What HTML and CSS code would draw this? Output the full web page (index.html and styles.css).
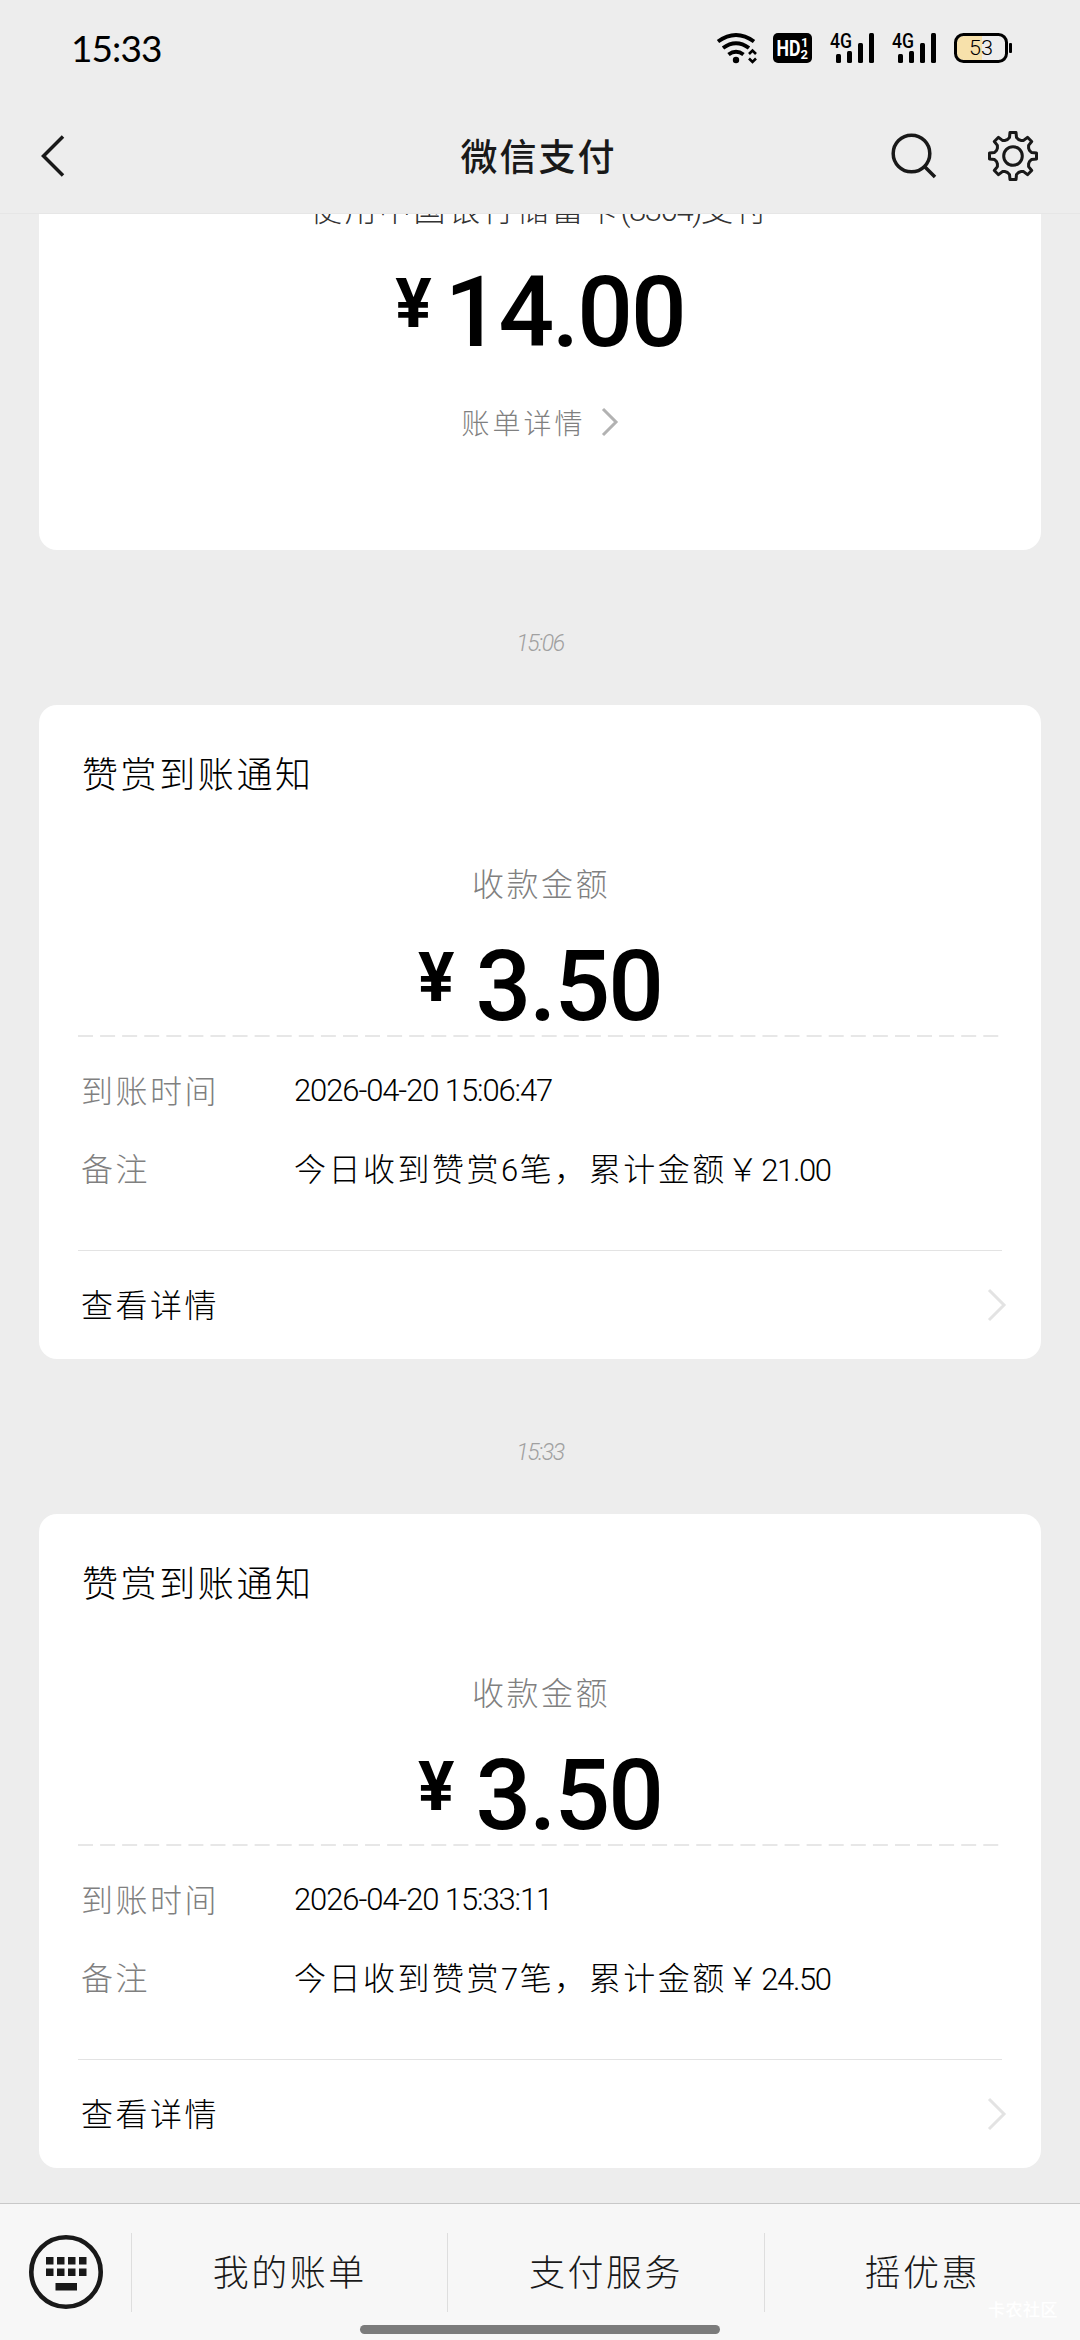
FILE: index.html
```html
<!DOCTYPE html>
<html lang="zh-CN">
<head>
<meta charset="utf-8">
<title>微信支付</title>
<link rel="stylesheet" href="styles.css">
</head>
<body>
<header class="status">
  <span class="clock">15:33</span>
  <svg class="status-icons" width="300" height="40" viewBox="713 28 300 40">
    <g fill="none" stroke="#000" stroke-width="4">
      <path d="M717 41.500Q735 28.500 753 41.500M722 48Q735 38.500 748 48M727.500 54.500Q735 49 742.500 54.500"/>
      <path stroke-width="2.600" d="M748 54l3.500-3.500 3.500 3.500M748 58.500l3.500 3.500 3.500-3.500"/>
    </g>
    <circle cx="735" cy="60" r="3.200"/>
    <rect x="772" y="33" width="39" height="30" rx="5"/>
    <g fill="#fff" class="hd">
      <text x="775.500" y="56" font-size="22" textLength="24" lengthAdjust="spacingAndGlyphs">HD</text>
      <text x="800" y="46.500" font-size="13">1</text>
      <text x="799.500" y="58.500" font-size="13">2</text>
    </g>
    <g id="signal">
      <text class="net" x="829" y="47.500" font-size="20" textLength="22" lengthAdjust="spacingAndGlyphs">4G</text>
      <rect x="835" y="54" width="5" height="9" rx="1.500"/>
      <rect x="846" y="51" width="5" height="12" rx="1.500"/>
      <rect x="857" y="43" width="5" height="20" rx="1.500"/>
      <rect x="868" y="33" width="5" height="30" rx="1.500"/>
    </g>
    <use href="#signal" x="62"/>
    <path fill="#f7e1ab" d="M981 36h-18q-7 0-7 7v10q0 7 7 7h18z"/>
    <rect x="954.500" y="34.500" width="51" height="27" rx="8" fill="none" stroke="#000" stroke-width="3"/>
    <rect x="1008" y="43" width="3" height="10" rx="1"/>
    <text class="level" x="968" y="55" font-size="20.500" textLength="24" lengthAdjust="spacingAndGlyphs">53</text>
  </svg>
</header>
<nav class="nav">
  <svg width="60" height="60" viewBox="-30 -30 60 60" fill="none" stroke="#191919" stroke-width="3.500"><path d="M10-19.500L-9.500 0 10 19.500"/></svg>
  <h1 class="nav-title">微信支付</h1>
  <div class="nav-actions">
    <svg width="60" height="60" viewBox="-30 -30 60 60" fill="none" stroke="#191919" stroke-width="3.500"><circle cx="-1.500" cy="-2.500" r="18.300"/><path d="M12 11L22 21"/></svg>
    <svg width="60" height="60" viewBox="-30 -30 60 60" fill="none" stroke="#191919" stroke-width="3" stroke-linejoin="round"><path d="M-5.500-16.500L-3.500-18.500-3-23.500 3-23.500 3.500-18.500 5.500-16.500 7.800-15.600 10.600-15.600 14.500-18.700 18.700-14.500 15.600-10.600 15.600-7.800 16.500-5.500 18.500-3.500 23.500-3 23.500 3 18.500 3.500 16.500 5.500 15.600 7.800 15.600 10.600 18.700 14.500 14.500 18.700 10.600 15.600 7.800 15.600 5.500 16.500 3.500 18.500 3 23.500-3 23.500-3.500 18.500-5.500 16.500-7.800 15.600-10.600 15.600-14.500 18.700-18.700 14.500-15.600 10.600-15.600 7.800-16.500 5.500-18.500 3.500-23.500 3-23.500-3-18.500-3.500-16.500-5.500-15.600-7.800-15.600-10.600-18.700-14.500-14.500-18.700-10.600-15.600-7.800-15.600z"/><circle r="9.300"/></svg>
  </div>
</nav>
<main class="feed">
  <section class="card card-bill">
    <p class="method">使用中国银行储蓄卡<span class="num">(8304)</span>支付</p>
    <p class="amount amount-bill"><span class="yen">¥</span>14.00</p>
    <p class="bill-link">账单详情<svg width="22" height="32" viewBox="0 0 22 32" fill="none" stroke="#b2b2b2" stroke-width="3"><path d="M4 3l13 13L4 29"/></svg></p>
  </section>
  <time class="stamp">15:06</time>
  <section class="card">
    <h2 class="card-title">赞赏到账通知</h2>
    <p class="label">收款金额</p>
    <p class="amount"><span class="yen">¥</span>3.50</p>
    <svg class="dash" width="924" height="2"><path d="M0 1H924" stroke="#dfdfdf" stroke-width="1.500" stroke-dasharray="15 7.080"/></svg>
    <dl class="rows">
      <dt>到账时间</dt><dd class="num date">2026-04-20 15:06:47</dd>
      <dt>备注</dt><dd>今日收到赞赏<span class="num count">6</span>笔，累计金额￥<span class="num">21.00</span></dd>
    </dl>
    <a class="more">查看详情<svg width="24" height="36" viewBox="0 0 24 36" fill="none" stroke="#e3e3e3" stroke-width="3"><path d="M4 3l15 15L4 33"/></svg></a>
  </section>
  <time class="stamp">15:33</time>
  <section class="card">
    <h2 class="card-title">赞赏到账通知</h2>
    <p class="label">收款金额</p>
    <p class="amount"><span class="yen">¥</span>3.50</p>
    <svg class="dash" width="924" height="2"><path d="M0 1H924" stroke="#dfdfdf" stroke-width="1.500" stroke-dasharray="15 7.080"/></svg>
    <dl class="rows">
      <dt>到账时间</dt><dd class="num date">2026-04-20 15:33:11</dd>
      <dt>备注</dt><dd>今日收到赞赏<span class="num count">7</span>笔，累计金额￥<span class="num">24.50</span></dd>
    </dl>
    <a class="more">查看详情<svg width="24" height="36" viewBox="0 0 24 36" fill="none" stroke="#e3e3e3" stroke-width="3"><path d="M4 3l15 15L4 33"/></svg></a>
  </section>
</main>
<footer class="menu">
  <div class="keyboard">
    <svg width="76" height="76" viewBox="28 2234 76 76" fill="#191919"><circle cx="66" cy="2272" r="34.700" fill="none" stroke="#191919" stroke-width="4.600"/><path d="M46 2257h7.500v7.500H46zM57 2257h7.500v7.500H57zM68 2257h7.500v7.500H68zM79 2257h7.500v7.500H79zM46 2268.500h7.500v7.500H46zM57 2268.500h7.500v7.500H57zM68 2268.500h7.500v7.500H68zM79 2268.500h7.500v7.500H79zM55.500 2283h21.500v7.500H55.500z"/></svg>
  </div>
  <a class="item">我的账单</a>
  <a class="item">支付服务</a>
  <a class="item">摇优惠</a>
  <i class="home-bar"></i>
  <span class="watermark">卡农社区</span>
</footer>
</body>
</html>
```
FILE: styles.css
```css
* { box-sizing: border-box; margin: 0; padding: 0; }

body {
  display: flex;
  flex-direction: column;
  width: 1080px;
  height: 2340px;
  overflow: hidden;
  background: #ededed;
  color: #000;
  font-family: "Noto Sans CJK SC", sans-serif;
  font-weight: 300;
  font-size: 32px;
  letter-spacing: 2.5px;
}

svg { display: block; flex: none; }

.status {
  display: flex;
  justify-content: space-between;
  align-items: center;
  height: 96px;
  padding: 0 66px 0 71px;
}
.clock { font: 400 37px/40px Lato, sans-serif; letter-spacing: -0.9px; }
.hd { font-family: Roboto, sans-serif; font-weight: 700; letter-spacing: 0; }
.net { font-family: Roboto, sans-serif; font-weight: 500; letter-spacing: 0; }
.level { font-family: Roboto, sans-serif; font-weight: 300; letter-spacing: 0; }

.nav {
  display: grid;
  grid-template-columns: 160px 1fr 160px;
  align-items: center;
  flex: none;
  height: 118px;
  padding: 2px 37px 0 23px;
  border-bottom: 1px solid #e6e6e6;
}
.nav-title { padding: 0 0 2px 11px; font-size: 37px; font-weight: 500; line-height: 44px; letter-spacing: 2px; text-align: center; color: #191919; }
.nav-actions { display: flex; justify-content: flex-end; gap: 40px; }

.feed {
  display: flex;
  flex-direction: column;
  justify-content: flex-end;
  flex: 1;
  min-height: 0;
  overflow: hidden;
  padding: 0 39px 35px;
}
.card {
  flex: none;
  height: 654px;
  padding: 47px 39px 0;
  border-radius: 18px;
  background: #fff;
}
.card-bill { height: 430px; padding-top: 67px; text-align: center; }
.stamp {
  flex: none;
  height: 155px;
  line-height: 187px;
  text-align: center;
  color: #a0a0a0;
  font-family: Roboto, sans-serif;
  font-style: italic;
  font-weight: 300;
  font-size: 23px;
  letter-spacing: -1.400px;
}
.card-title { font-size: 36px; font-weight: 300; line-height: 40px; letter-spacing: 2.600px; padding-left: 4px; }
.label { margin-top: 70px; padding-left: 2px; line-height: 40px; text-align: center; color: #808080; }
.amount {
  height: 80px;
  margin-top: 45px;
  text-align: center;
  font: 500 98px/80px Roboto, sans-serif;
  letter-spacing: -2px;
}
.yen { margin-right: 23px; font-size: 68px; font-weight: 700; line-height: 1px; vertical-align: 19px; }
.dash { margin-top: 8px; }

.num { font-family: Roboto, sans-serif; font-size: 31px; letter-spacing: -1.400px; }
.date { letter-spacing: -1.100px; padding-bottom: 1px; }
.count { margin-right: 3px; }

.rows {
  display: grid;
  grid-template-columns: 213px 1fr;
  grid-auto-rows: 78px;
  align-items: center;
  height: 198px;
  margin-top: 15px;
  padding-left: 3px;
}
.rows dt { color: #808080; }
.rows dt, .rows dd:not(.date) { padding-bottom: 5px; }

.more {
  display: flex;
  justify-content: space-between;
  align-items: center;
  height: 109px;
  padding: 0 0 4px 3px;
  margin-right: -7px;
  background: linear-gradient(#e3e3e3, #e3e3e3) top left / 924px 1px no-repeat;
}
.more svg { position: relative; top: 2px; }

.method { line-height: 40px; color: #333; }
.amount-bill { margin-top: 42px; }
.amount-bill .yen { margin-right: 15px; }
.bill-link { display: flex; justify-content: center; align-items: center; gap: 13px; margin-top: 49px; height: 40px; padding-left: 2px; font-size: 28px; letter-spacing: 3px; color: #808080; }

.menu {
  position: relative;
  display: flex;
  align-items: center;
  flex: none;
  height: 137px;
  border-top: 1px solid #c8c8c8;
  background: #f7f7f7;
  color: #191919;
}
.keyboard { display: flex; width: 131px; padding-left: 28px; }
.item {
  flex: 1;
  height: 79px;
  border-left: 1px solid #dedede;
  font-size: 36px;
  line-height: 74px;
  letter-spacing: 2.500px;
  text-align: center;
}
.home-bar { position: absolute; left: 360px; bottom: 6px; width: 360px; height: 9px; border-radius: 5px; background: #7b7b7b; }
.watermark { position: absolute; right: 22px; bottom: 19px; font-size: 17px; font-weight: 500; line-height: 24px; letter-spacing: 0.500px; color: #fff; }
```
